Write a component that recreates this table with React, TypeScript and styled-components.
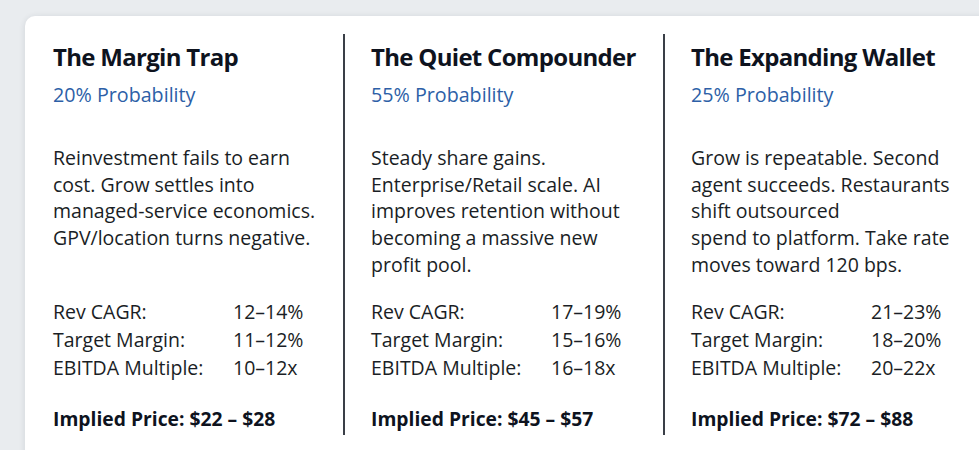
import React from 'react';
import styled, { createGlobalStyle } from 'styled-components';

const GlobalStyle = createGlobalStyle`
  html, body {
    margin: 0;
    padding: 0;
    background: #e9ecef;
    overflow: hidden;
  }
  body {
    font-family: 'Open Sans', 'Noto Sans', sans-serif;
  }
`;

const Page = styled.div`
  padding: 16px 0 0 25px;
  height: 450px;
  box-sizing: border-box;
  overflow: hidden;
`;

const Card = styled.div`
  width: 1000px;
  height: 480px;
  background: #ffffff;
  border-radius: 10px;
  box-shadow: 0 1px 6px rgba(30, 40, 60, 0.12);
  padding-top: 18px;
  box-sizing: border-box;
`;

const Columns = styled.div`
  display: grid;
  grid-template-columns: 318px 320px 1fr;
`;

const Column = styled.section<{ $divider?: boolean }>`
  height: 401px;
  box-sizing: border-box;
  padding: 6px 0 0 ${(p) => (p.$divider ? '26px' : '28px')};
  border-left: ${(p) => (p.$divider ? '2px solid #3a3f47' : 'none')};
  display: flex;
  flex-direction: column;
`;

const Title = styled.h2`
  margin: 0;
  font-size: 24px;
  line-height: 34px;
  font-weight: 700;
  color: #0e131e;
  letter-spacing: -0.7px;
`;

const Probability = styled.div`
  margin-top: 7px;
  font-size: 19.7px;
  line-height: 28px;
  color: #2d5fa7;
`;

const Body = styled.p`
  margin: 36px 0 0;
  font-size: 19.5px;
  line-height: 26.7px;
  color: #1a1e25;
  height: 134px;
`;

const Metrics = styled.div`
  margin-top: 19px;
  display: grid;
  grid-template-columns: 180px 1fr;
  font-size: 19.5px;
  line-height: 28px;
  color: #1a1e25;
`;

const Price = styled.div`
  margin-top: 23px;
  font-size: 19.3px;
  line-height: 28px;
  font-weight: 700;
  color: #0e131e;
`;

type Scenario = {
  title: string;
  probability: string;
  lines: string[];
  metrics: [string, string][];
  price: string;
};

const scenarios: Scenario[] = [
  {
    title: 'The Margin Trap',
    probability: '20% Probability',
    lines: [
      'Reinvestment fails to earn',
      'cost. Grow settles into',
      'managed-service economics.',
      'GPV/location turns negative.',
    ],
    metrics: [
      ['Rev CAGR:', '12–14%'],
      ['Target Margin:', '11–12%'],
      ['EBITDA Multiple:', '10–12x'],
    ],
    price: 'Implied Price: $22 – $28',
  },
  {
    title: 'The Quiet Compounder',
    probability: '55% Probability',
    lines: [
      'Steady share gains.',
      'Enterprise/Retail scale. AI',
      'improves retention without',
      'becoming a massive new',
      'profit pool.',
    ],
    metrics: [
      ['Rev CAGR:', '17–19%'],
      ['Target Margin:', '15–16%'],
      ['EBITDA Multiple:', '16–18x'],
    ],
    price: 'Implied Price: $45 – $57',
  },
  {
    title: 'The Expanding Wallet',
    probability: '25% Probability',
    lines: [
      'Grow is repeatable. Second',
      'agent succeeds. Restaurants',
      'shift outsourced',
      'spend to platform. Take rate',
      'moves toward 120 bps.',
    ],
    metrics: [
      ['Rev CAGR:', '21–23%'],
      ['Target Margin:', '18–20%'],
      ['EBITDA Multiple:', '20–22x'],
    ],
    price: 'Implied Price: $72 – $88',
  },
];

const App: React.FC = () => {
  return (
    <>
      <GlobalStyle />
      <Page>
        <Card>
          <Columns>
            {scenarios.map((s, i) => (
              <Column key={s.title} $divider={i > 0}>
                <Title>{s.title}</Title>
                <Probability>{s.probability}</Probability>
                <Body>
                  {s.lines.map((line, j) => (
                    <React.Fragment key={j}>
                      {line}
                      {j < s.lines.length - 1 && <br />}
                    </React.Fragment>
                  ))}
                </Body>
                <Metrics>
                  {s.metrics.map(([label, value]) => (
                    <React.Fragment key={label}>
                      <span>{label}</span>
                      <span>{value}</span>
                    </React.Fragment>
                  ))}
                </Metrics>
                <Price>{s.price}</Price>
              </Column>
            ))}
          </Columns>
        </Card>
      </Page>
    </>
  );
};

export default App;
